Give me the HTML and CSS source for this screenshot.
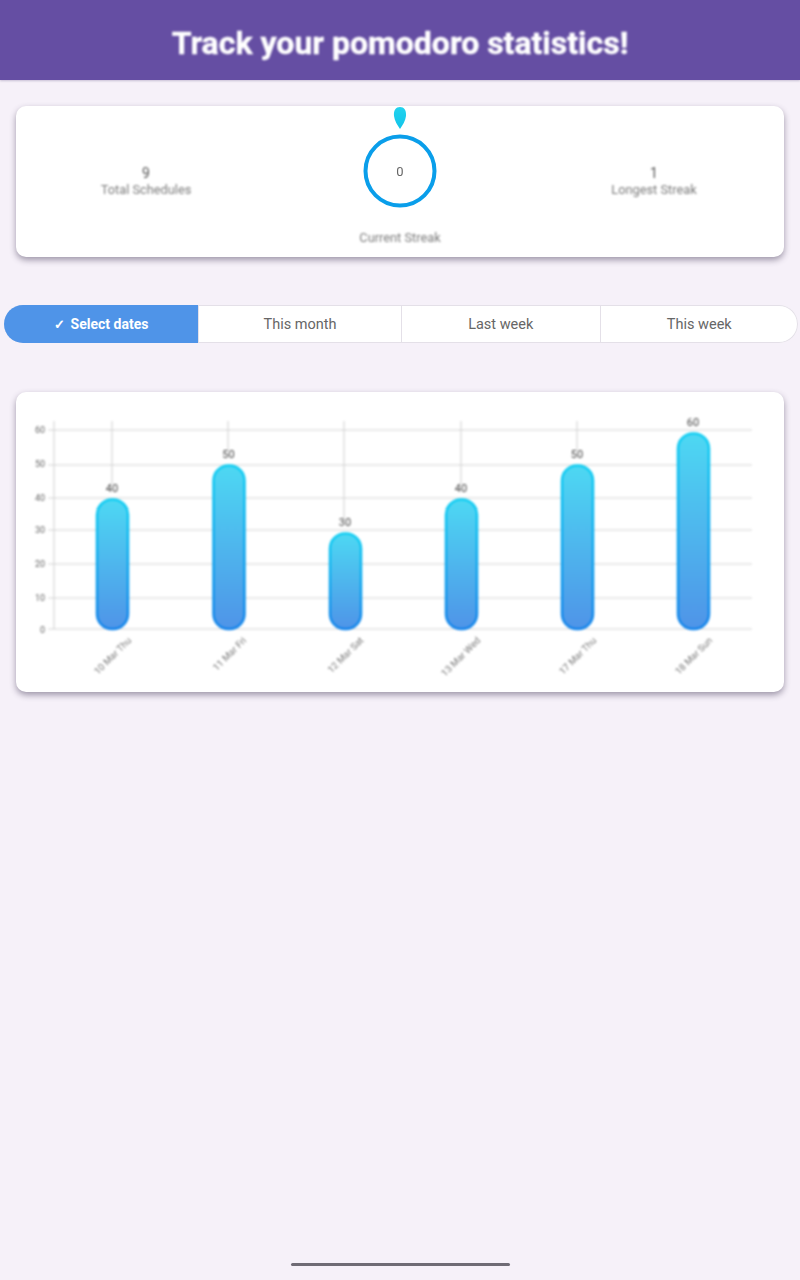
FILE: index.html
```html
<!DOCTYPE html>
<html lang="en">
<head>
    <meta charset="UTF-8">
    <meta name="viewport" content="width=device-width, initial-scale=1.0">
    <title>Pomodoro statistics</title>
    <link rel="stylesheet" href="styles.css">
</head>

<body>
    <header class="app_bar">
        <h1>Track your pomodoro statistics!</h1>
    </header>

    <section class="card streak_card">
        <div class="stat">
            <span class="stat_value">9</span>
            <span class="stat_label">Total Schedules</span>
        </div>
        <div class="stat_center">
            <svg class="ring" width="80" height="104" viewBox="0 0 80 104">
                <defs>
                    <linearGradient id="dropFill" x1="0" y1="0" x2="0" y2="1">
                        <stop offset="0" stop-color="#22d3ee"/>
                        <stop offset="1" stop-color="#12c4ea"/>
                    </linearGradient>
                </defs>
                <path d="M40 1 C44 1 46.500 4 46 10 C45.500 15 42.500 19 40 23 C37.500 19 34.500 15 34 10 C33.500 4 36 1 40 1 Z" fill="url(#dropFill)"/>
                <circle cx="40" cy="65" r="34.5" fill="none" stroke="#0a9eea" stroke-width="4"/>
                <text x="40" y="69.5" text-anchor="middle" class="ring_value">0</text>
            </svg>
            <span class="stat_label streak_label">Current Streak</span>
        </div>
        <div class="stat">
            <span class="stat_value">1</span>
            <span class="stat_label">Longest Streak</span>
        </div>
    </section>

    <nav class="segments">
        <div class="segment selected"><span class="check">✓</span> Select dates</div>
        <div class="segment month">This month</div>
        <div class="segment">Last week</div>
        <div class="segment">This week</div>
    </nav>

    <section class="card chart_card">
        <svg class="chart" width="768" height="300" viewBox="16 392 768 300">
            <defs>
                <linearGradient id="barFill" x1="0" y1="0" x2="0" y2="1">
                    <stop offset="0" stop-color="#4dd8f3"/>
                    <stop offset="1" stop-color="#4f94e8"/>
                </linearGradient>
                <linearGradient id="barEdge" x1="0" y1="0" x2="0" y2="1">
                    <stop offset="0" stop-color="#0fcdf2"/>
                    <stop offset="1" stop-color="#1183ea"/>
                </linearGradient>
            </defs>

            <!-- grid -->
            <g class="grid">
                <line x1="48" y1="430" x2="752" y2="430"/>
                <line x1="48" y1="465" x2="752" y2="465"/>
                <line x1="48" y1="498" x2="752" y2="498"/>
                <line x1="48" y1="530" x2="752" y2="530"/>
                <line x1="48" y1="564" x2="752" y2="564"/>
                <line x1="48" y1="598" x2="752" y2="598"/>
                <line x1="48" y1="629" x2="752" y2="629"/>
            </g>
            <g class="ticks">
                <line x1="54" y1="421" x2="54" y2="629"/>
                <line x1="112" y1="421" x2="112" y2="484"/>
                <line x1="228" y1="421" x2="228" y2="450"/>
                <line x1="344" y1="421" x2="344" y2="518"/>
                <line x1="461" y1="421" x2="461" y2="484"/>
                <line x1="577" y1="421" x2="577" y2="450"/>
            </g>

            <!-- y axis -->
            <g class="y_labels">
                <text x="45" y="433">60</text>
                <text x="45" y="467">50</text>
                <text x="45" y="501">40</text>
                <text x="45" y="533">30</text>
                <text x="45" y="567">20</text>
                <text x="45" y="601">10</text>
                <text x="45" y="633">0</text>
            </g>

            <!-- bars -->
            <g class="bars">
                <rect x="97" y="499.5" width="31" height="129.500" rx="15"/>
                <rect x="213.500" y="465.5" width="31" height="163.500" rx="15"/>
                <rect x="330" y="533.5" width="31" height="95.500" rx="15"/>
                <rect x="446" y="499.5" width="31" height="129.500" rx="15"/>
                <rect x="562" y="465.5" width="31" height="163.500" rx="15"/>
                <rect x="678" y="433.5" width="31" height="195.500" rx="15"/>
            </g>
            <g class="bar_values">
                <text x="112" y="492">40</text>
                <text x="228.500" y="458">50</text>
                <text x="345" y="526">30</text>
                <text x="461" y="492">40</text>
                <text x="577" y="458">50</text>
                <text x="693" y="426">60</text>
            </g>

            <!-- x axis -->
            <g class="x_labels">
                <text transform="translate(132 641) rotate(-45)">10 Mar Thu</text>
                <text transform="translate(247 641) rotate(-45)">11 Mar Fri</text>
                <text transform="translate(364 641) rotate(-45)">12 Mar Sat</text>
                <text transform="translate(481 641) rotate(-45)">13 Mar Wed</text>
                <text transform="translate(597 641) rotate(-45)">17 Mar Thu</text>
                <text transform="translate(713 641) rotate(-45)">18 Mar Sun</text>
            </g>
        </svg>
    </section>

    <div class="home_bar"></div>
</body>
</html>
```

FILE: styles.css
```css
body {
    margin: 0;
    min-height: 1280px;
    display: flex;
    flex-direction: column;
    background-color: #f6f1f9;
    font-family: Roboto, "Liberation Sans", sans-serif;
}

.app_bar {
    height: 80px;
    box-sizing: border-box;
    padding-top: 6px;
    display: flex;
    align-items: center;
    justify-content: center;
    background-color: #654ea3;
    box-shadow: 0 1px 2px rgba(60, 40, 100, 0.25);
}
.app_bar h1 {
    margin: 0;
    color: #fff;
    font-size: 32px;
    font-weight: 700;
    -webkit-text-stroke: 0.4px #fff;
    filter: blur(0.8px);
}

.card {
    margin: 0 16px;
    background-color: #fff;
    border-radius: 10px;
    box-shadow: 0 3px 6px rgba(50, 40, 70, 0.45);
}

.streak_card {
    margin-top: 26px;
    height: 151px;
    padding: 0 3px;
    display: grid;
    grid-template-columns: 1fr 1fr 1fr;
}

.stat {
    padding-top: 59px;
    display: flex;
    flex-direction: column;
    align-items: center;
    filter: blur(1.1px);
}
.stat_value {
    font-size: 14px;
    line-height: 16px;
    color: #555;
}
.stat_label {
    font-size: 12.800px;
    line-height: 14px;
    margin-top: 2px;
    color: #7c7c7c;
}

.stat_center {
    display: flex;
    flex-direction: column;
    align-items: center;
}
.ring {
    display: block;
    filter: blur(0.7px);
}
.ring_value {
    font-size: 13px;
    fill: #666;
}
.streak_label {
    margin-top: 21px;
    filter: blur(1.1px);
}

.segments {
    margin: 48px 2px 0 4px;
    height: 38px;
    display: flex;
    background-color: #fff;
    border-radius: 19px;
    overflow: hidden;
    box-shadow: inset 0 0 0 1px #e4e0e8;
}
.segment {
    flex: 1;
    display: flex;
    align-items: center;
    justify-content: center;
    font-size: 14.500px;
    color: #666;
    border-left: 1px solid #e4e0e8;
}
.segment.month {
    flex: 0 0 202px;
}
.segment.selected {
    flex: 0 0 194px;
    gap: 6px;
    color: #fff;
    font-size: 14px;
    font-weight: 700;
    border-left: 0;
    background-color: #4f94e8;
}
.check {
    font-size: 13px;
}

.chart_card {
    margin-top: 49px;
    height: 300px;
}
.chart {
    display: block;
    filter: blur(0.9px);
}
.grid line {
    stroke: #e2e2e2;
    stroke-width: 1.500;
}
.ticks line {
    stroke: #cfcfcf;
    stroke-width: 1;
}
.y_labels text {
    font-size: 9px;
    fill: #666;
    text-anchor: end;
}
.bars rect {
    fill: url(#barFill);
    stroke: url(#barEdge);
    stroke-width: 2.500;
}
.bar_values text {
    font-size: 11px;
    fill: #444;
    text-anchor: middle;
}
.x_labels text {
    font-size: 9.500px;
    fill: #777;
    text-anchor: end;
}

.home_bar {
    width: 219px;
    height: 3px;
    margin: auto auto 14px;
    background-color: #6f6b75;
    border-radius: 2px;
}
```
